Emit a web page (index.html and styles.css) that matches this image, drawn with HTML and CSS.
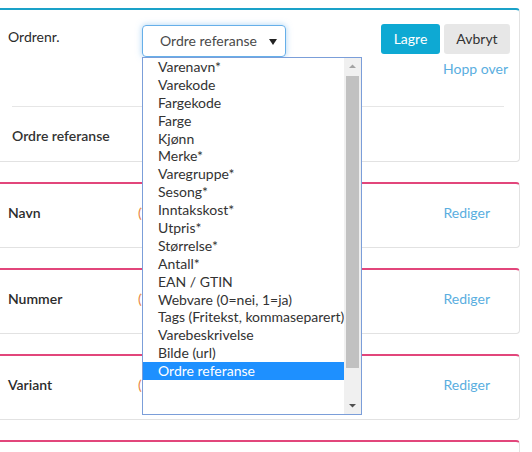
FILE: index.html
```html
<!DOCTYPE html>
<html lang="no">
<head>
<meta charset="utf-8">
<title>Import</title>
<link rel="stylesheet" href="styles.css">
</head>
<body>
<div class="page">
  <div class="card card-top">
    <div class="row-top">
      <div class="label">Ordrenr.</div>
      <div class="select-wrap">
        <div class="select">
          <span>Ordre referanse</span>
          <svg class="caret" width="8" height="6" viewBox="0 0 8 6"><path d="M0 0h8L4 6z" fill="#222"/></svg>
        </div>
        <div class="dropdown">
          <ul class="options">
            <li>Varenavn*</li>
            <li>Varekode</li>
            <li>Fargekode</li>
            <li>Farge</li>
            <li>Kjønn</li>
            <li>Merke*</li>
            <li>Varegruppe*</li>
            <li>Sesong*</li>
            <li>Inntakskost*</li>
            <li>Utpris*</li>
            <li>Størrelse*</li>
            <li>Antall*</li>
            <li>EAN / GTIN</li>
            <li>Webvare (0=nei, 1=ja)</li>
            <li>Tags (Fritekst, kommaseparert)</li>
            <li>Varebeskrivelse</li>
            <li>Bilde (url)</li>
            <li class="selected">Ordre referanse</li>
          </ul>
          <div class="scrollbar">
            <svg class="arrow" width="17" height="17" viewBox="0 0 17 17"><path d="M5 10h7L8.5 6.5z" fill="#a3a3a3"/></svg>
            <div class="track"><div class="thumb"></div></div>
            <svg class="arrow" width="17" height="17" viewBox="0 0 17 17"><path d="M5 7h7L8.5 10.5z" fill="#505050"/></svg>
          </div>
        </div>
      </div>
      <div class="actions">
        <div class="buttons">
          <button class="btn btn-primary">Lagre</button>
          <button class="btn btn-default">Avbryt</button>
        </div>
        <a class="link skip">Hopp over</a>
      </div>
    </div>
    <div class="divider"></div>
    <div class="ref-label">Ordre referanse</div>
  </div>

  <div class="card card-field">
    <div class="label field-label">Navn</div>
    <div class="mapped">(Varenavn*)</div>
    <a class="link edit">Rediger</a>
  </div>
  <div class="card card-field">
    <div class="label field-label">Nummer</div>
    <div class="mapped">(Varekode)</div>
    <a class="link edit">Rediger</a>
  </div>
  <div class="card card-field">
    <div class="label field-label">Variant</div>
    <div class="mapped">(Farge)</div>
    <a class="link edit">Rediger</a>
  </div>
  <div class="card card-field card-last"></div>
</div>
</body>
</html>
```

FILE: styles.css
```css
* { box-sizing: border-box; }

html, body {
  margin: 0;
  padding: 0;
  background: #fff;
  overflow: hidden;
}

body {
  font-family: Lato, "Open Sans", "Liberation Sans", sans-serif;
  font-size: 14px;
  line-height: 20px;
  color: #333;
}

.page {
  padding-top: 8px;
  width: 532px;
  height: 452px;
  overflow: hidden;
}

.card {
  width: 524px;
  margin-left: -4px;
  border: 1px solid #e2e2e2;
  border-top: 2px solid #e2467b;
  border-radius: 4px;
  background: #fff;
  margin-bottom: 20px;
}

.card-top {
  border-top-color: #1aa1c8;
  padding: 14px 9px 15px 11px;
}

.row-top {
  display: flex;
  align-items: flex-start;
  height: 82px;
}

.label {
  color: #2b2b2b;
}

.row-top .label {
  width: 134px;
  margin-top: 3px;
}

.select-wrap {
  position: relative;
  margin-top: 1px;
}

.select {
  width: 144px;
  height: 32px;
  border: 1px solid #66afe9;
  border-radius: 4px;
  box-shadow: 0 0 6px rgba(102, 175, 233, 0.55);
  display: flex;
  align-items: center;
  justify-content: space-between;
  padding: 0 8px 0 17px;
  color: #4a4a4a;
}

.caret { display: block; margin-top: 1px; }

.dropdown {
  position: absolute;
  left: 0;
  top: 32px;
  width: 220px;
  height: 358px;
  border: 1px solid #7b9ed9;
  background: #fff;
  display: flex;
  z-index: 10;
}

.options {
  list-style: none;
  margin: 0;
  padding: 0;
  flex: 1;
}

.options li {
  height: 17.9px;
  line-height: 17px;
  padding-left: 15px;
  color: #333;
  white-space: nowrap;
}

.options li.selected {
  background: #1e90ff;
  color: #fff;
}

.scrollbar {
  width: 17px;
  background: #f0f0f0;
  display: flex;
  flex-direction: column;
}

.arrow { display: block; flex: none; }

.track {
  flex: 1;
  padding: 1px 2px 0 2px;
}

.thumb {
  height: 292px;
  background: #c1c1c1;
}

.actions {
  margin-left: auto;
  display: flex;
  flex-direction: column;
  align-items: flex-end;
}

.buttons {
  display: flex;
  gap: 4px;
}

.btn {
  font-family: inherit;
  font-size: 14px;
  height: 30px;
  border: none;
  border-radius: 3px;
  padding: 0 12px;
  line-height: 30px;
}

.btn-primary {
  background: #0ea9d3;
  color: #fff;
  width: 59px;
}

.btn-default {
  background: #e7e7e7;
  color: #333;
  width: 66px;
}

.link {
  color: #5aaee0;
  text-decoration: none;
}

.skip {
  margin-top: 5px;
  margin-right: 2px;
}

.divider {
  height: 1px;
  background: #e6e6e6;
  margin: 0 6px 0 4px;
}

.ref-label {
  margin: 19px 0 0 4px;
  font-weight: 600;
}

.card-field {
  display: flex;
  align-items: flex-start;
  padding: 19px 29px 24px 11px;
  height: 66px;
}

.field-label {
  width: 130px;
  font-weight: 600;
}

.mapped {
  color: #e8843f;
}

.edit {
  margin-left: auto;
}
```
